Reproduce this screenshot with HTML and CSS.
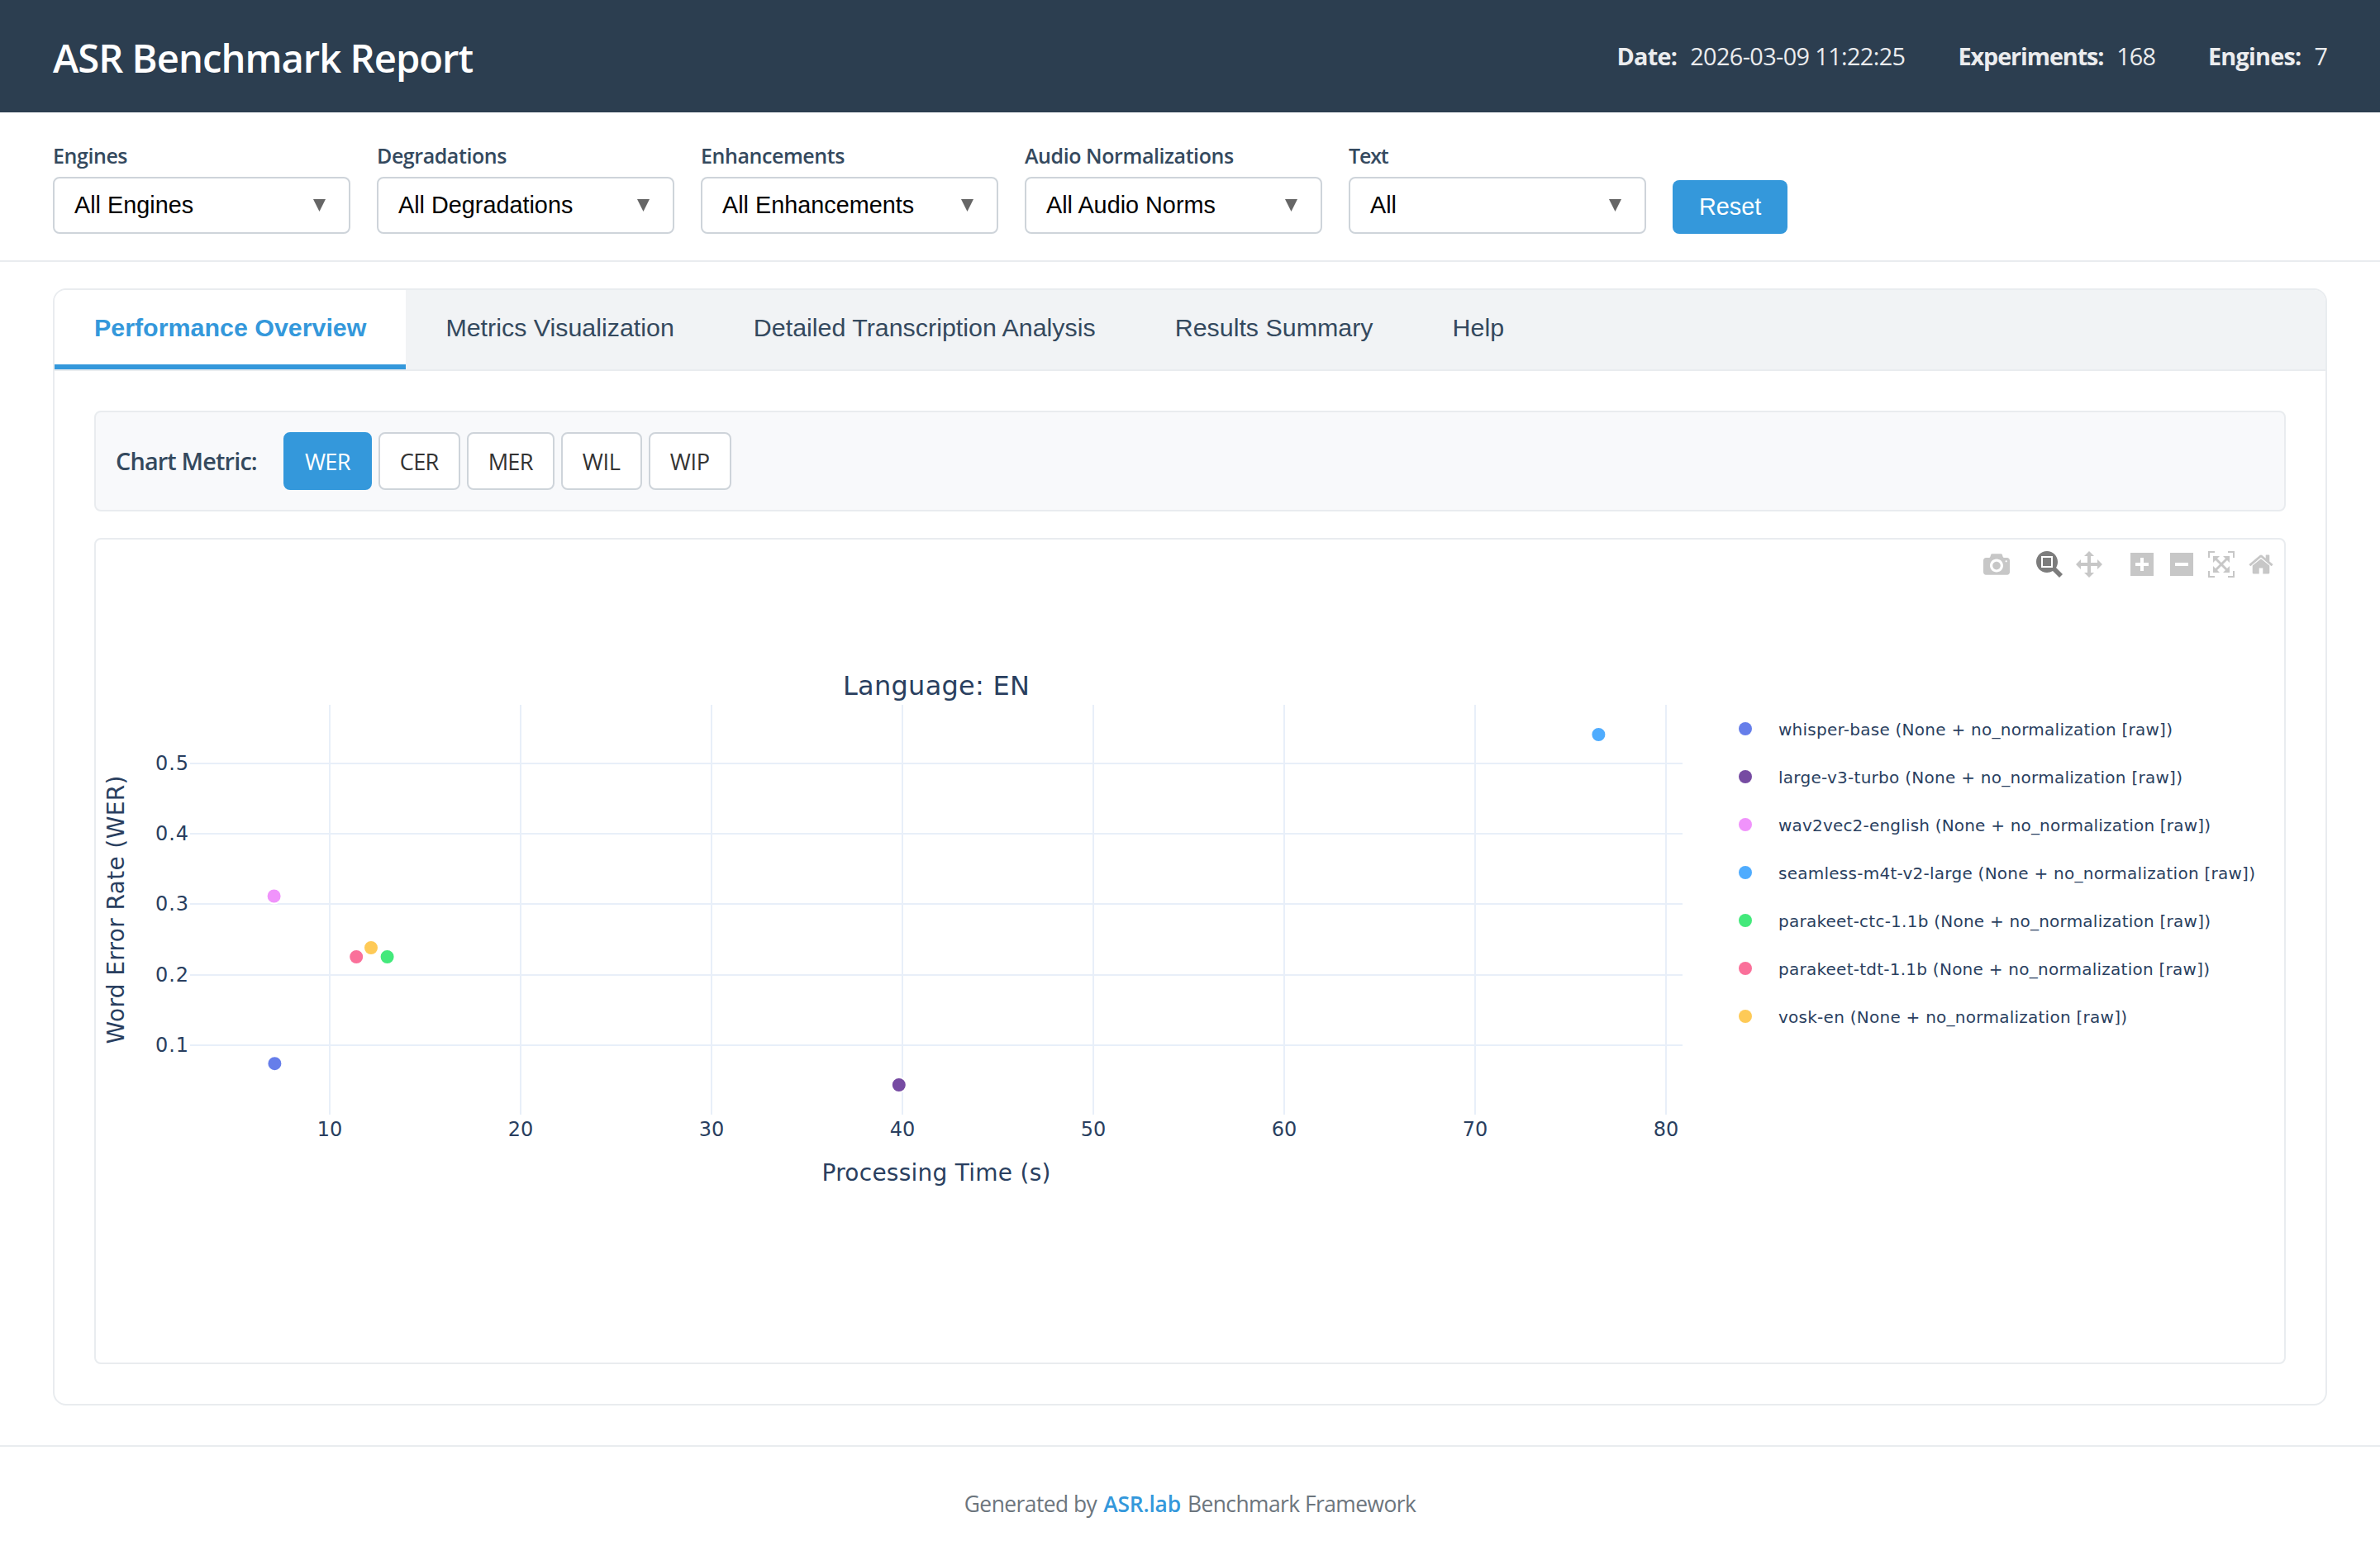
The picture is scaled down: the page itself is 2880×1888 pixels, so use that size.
FILE: index.html
```html
<!DOCTYPE html>
<html lang="en">
<head>
<meta charset="utf-8">
<title>ASR Benchmark Report</title>
<link rel="stylesheet" href="styles.css">
</head>
<body>
<header class="header">
  <h1 class="title">ASR Benchmark Report</h1>
  <div class="meta">
    <div class="meta-item"><strong>Date:</strong><span class="meta-date">2026-03-09 11:22:25</span></div>
    <div class="meta-item"><strong class="meta-wide">Experiments:</strong><span class="meta-count">168</span></div>
    <div class="meta-item"><strong>Engines:</strong><span class="meta-count">7</span></div>
  </div>
</header>

<section class="filters">
  <div class="filter"><label class="filter-label">Engines</label><div class="select"><span>All Engines</span><i class="caret"></i></div></div>
  <div class="filter"><label class="filter-label">Degradations</label><div class="select"><span>All Degradations</span><i class="caret"></i></div></div>
  <div class="filter"><label class="filter-label">Enhancements</label><div class="select"><span>All Enhancements</span><i class="caret"></i></div></div>
  <div class="filter"><label class="filter-label">Audio Normalizations</label><div class="select"><span>All Audio Norms</span><i class="caret"></i></div></div>
  <div class="filter"><label class="filter-label filter-label-short">Text</label><div class="select"><span>All</span><i class="caret"></i></div></div>
  <button class="reset">Reset</button>
</section>

<main class="panel">
  <nav class="tabs">
    <button class="tab tab-active">Performance Overview</button>
    <button class="tab">Metrics Visualization</button>
    <button class="tab">Detailed Transcription Analysis</button>
    <button class="tab">Results Summary</button>
    <button class="tab">Help</button>
  </nav>
  <div class="content">
    <div class="metric-bar">
      <span class="metric-label">Chart Metric:</span>
      <div class="metric-buttons">
        <button class="metric metric-active">WER</button>
        <button class="metric">CER</button>
        <button class="metric">MER</button>
        <button class="metric metric-narrow">WIL</button>
        <button class="metric metric-narrow">WIP</button>
      </div>
    </div>
    <div class="chart">
      <svg class="plot" viewBox="116 653 2648 996" width="2648" height="996">
        <g class="grid">
          <path d="M399 853V1349M630 853V1349M861 853V1349M1092 853V1349M1323 853V1349M1554 853V1349M1785 853V1349M2016 853V1349"/>
          <path d="M230 924H2036M230 1009H2036M230 1094H2036M230 1180H2036M230 1265H2036"/>
        </g>
        <g class="points">
          <circle cx="332.4" cy="1287.2" r="9" fill="#667eea"/>
          <circle cx="1087.8" cy="1313" r="9" fill="#764ba2"/>
          <circle cx="331.6" cy="1084.5" r="9" fill="#f093fb"/>
          <circle cx="1934.4" cy="889" r="9" fill="#4facfe"/>
          <circle cx="468.6" cy="1158" r="9" fill="#43e97b"/>
          <circle cx="431.2" cy="1158" r="9" fill="#fa709a"/>
          <circle cx="449" cy="1147" r="9" fill="#feca57"/>
        </g>
        <g class="tick tick-x">
          <text x="399" y="1375">10</text>
          <text x="630" y="1375">20</text>
          <text x="861" y="1375">30</text>
          <text x="1092" y="1375">40</text>
          <text x="1323" y="1375">50</text>
          <text x="1554" y="1375">60</text>
          <text x="1785" y="1375">70</text>
          <text x="2016" y="1375">80</text>
        </g>
        <g class="tick tick-y">
          <text x="228" y="932" textLength="40">0.5</text>
          <text x="228" y="1017" textLength="40">0.4</text>
          <text x="228" y="1102" textLength="40">0.3</text>
          <text x="228" y="1188" textLength="40">0.2</text>
          <text x="228" y="1273" textLength="40">0.1</text>
        </g>
        <text class="chart-title" x="1133" y="841" textLength="226">Language: EN</text>
        <text class="axis-title" x="1133" y="1429" textLength="277">Processing Time (s)</text>
        <text class="axis-title" transform="translate(150 1101) rotate(-90)" textLength="325">Word Error Rate (WER)</text>
        <g class="legend">
          <circle cx="2112" cy="882" r="8" fill="#667eea"/>
          <text x="2152" y="890" textLength="477">whisper-base (None + no_normalization [raw])</text>
          <circle cx="2112" cy="940" r="8" fill="#764ba2"/>
          <text x="2152" y="948" textLength="489">large-v3-turbo (None + no_normalization [raw])</text>
          <circle cx="2112" cy="998" r="8" fill="#f093fb"/>
          <text x="2152" y="1006" textLength="523">wav2vec2-english (None + no_normalization [raw])</text>
          <circle cx="2112" cy="1056" r="8" fill="#4facfe"/>
          <text x="2152" y="1064" textLength="577">seamless-m4t-v2-large (None + no_normalization [raw])</text>
          <circle cx="2112" cy="1114" r="8" fill="#43e97b"/>
          <text x="2152" y="1122" textLength="523">parakeet-ctc-1.1b (None + no_normalization [raw])</text>
          <circle cx="2112" cy="1172" r="8" fill="#fa709a"/>
          <text x="2152" y="1180" textLength="522">parakeet-tdt-1.1b (None + no_normalization [raw])</text>
          <circle cx="2112" cy="1230" r="8" fill="#feca57"/>
          <text x="2152" y="1238" textLength="422">vosk-en (None + no_normalization [raw])</text>
        </g>
      </svg>
      <div class="modebar">
        <div class="modebar-group">
          <svg viewBox="0 0 1000 1000" width="32" height="32"><path transform="matrix(1 0 0 -1 0 850)" d="m500 450c-83 0-150-67-150-150 0-83 67-150 150-150 83 0 150 67 150 150 0 83-67 150-150 150z m400 150h-120c-16 0-34 13-39 29l-31 93c-6 15-23 28-40 28h-340c-16 0-34-13-39-28l-31-94c-6-15-23-28-40-28h-120c-55 0-100-45-100-100v-450c0-55 45-100 100-100h800c55 0 100 45 100 100v450c0 55-45 100-100 100z m-400-550c-138 0-250 112-250 250 0 138 112 250 250 250 138 0 250-112 250-250 0-138-112-250-250-250z m365 380c-19 0-35 16-35 35 0 19 16 35 35 35 19 0 35-16 35-35 0-19-16-35-35-35z"/></svg>
        </div>
        <div class="modebar-group">
          <svg class="modebar-active" viewBox="0 0 1000 1000" width="32" height="32"><path transform="matrix(1 0 0 -1 0 850)" d="m1000-25l-250 251c40 63 63 138 63 218 0 224-182 406-407 406-224 0-406-182-406-406s183-406 407-406c80 0 155 22 218 62l250-250 125 125z m-812 250l0 438 437 0 0-438-437 0z m62 375l313 0 0-312-313 0 0 312z"/></svg>
          <svg viewBox="0 0 1000 1000" width="32" height="32"><path transform="matrix(1 0 0 -1 0 850)" d="m1000 350l-187 188 0-125-250 0 0 250 125 0-188 187-187-187 125 0 0-250-250 0 0 125-188-188 186-187 0 125 252 0 0-250-125 0 187-188 188 188-125 0 0 250 250 0 0-126 187 188z"/></svg>
        </div>
        <div class="modebar-group">
          <svg viewBox="0 0 875 1000" width="32" height="32"><path transform="matrix(1 0 0 -1 0 850)" d="m1 787l0-875 875 0 0 875-875 0z m687-500l-187 0 0-187-125 0 0 187-188 0 0 125 188 0 0 187 125 0 0-187 187 0 0-125z"/></svg>
          <svg viewBox="0 0 875 1000" width="32" height="32"><path transform="matrix(1 0 0 -1 0 850)" d="m0 788l0-876 876 0 0 876-876 0z m688-500l-500 0 0 125 500 0 0-125z"/></svg>
          <svg viewBox="0 0 1000 1000" width="32" height="32"><path transform="matrix(1 0 0 -1 0 850)" d="m250 850l-187 0-63 0 0-62 0-188 63 0 0 188 187 0 0 62z m688 0l-188 0 0-62 188 0 0-188 62 0 0 188 0 62-62 0z m-875-938l0 188-63 0 0-188 0-62 63 0 187 0 0 62-187 0z m875 188l0-188-188 0 0-62 188 0 62 0 0 62 0 188-62 0z m-125 188l-1 0-93-94-156 156 156 156 92-93 2 0 0 250-250 0 0-2 93-92-156-156-156 156 94 92 0 2-250 0 0-250 0 0 93 93 157-156-157-156-93 94 0 0 0-250 250 0 0 0-94 93 156 157 156-157-93-93 0 0 250 0 0 250z"/></svg>
          <svg viewBox="0 0 928.6 1000" width="32" height="32"><path transform="matrix(1 0 0 -1 0 850)" d="m786 296v-267q0-15-11-26t-25-10h-214v214h-143v-214h-214q-15 0-25 10t-11 26v267q0 1 0 2t0 2l321 264 321-264q1-1 1-4z m124 39l-34-41q-5-5-12-6h-2q-7 0-12 3l-386 322-386-322q-7-4-13-4-7 2-12 7l-35 41q-4 5-3 13t6 12l401 334q18 15 42 15t43-15l136-114v109q0 8 5 13t13 5h107q8 0 13-5t5-13v-227l122-102q5-5 6-12t-4-13z"/></svg>
        </div>
      </div>
    </div>
  </div>
</main>

<footer class="footer"><span>Generated by</span><a class="foot-link">ASR.lab</a><span>Benchmark Framework</span></footer>
</body>
</html>
```
FILE: styles.css
```css
* { box-sizing: border-box; }
body {
  margin: 0;
  background: #fff;
  color: #2c3e50;
  font-family: "Open Sans", "Noto Sans", sans-serif;
}
button { border: 0; margin: 0; background: none; font-family: "Liberation Sans", Arial, sans-serif; }

.header {
  display: flex;
  justify-content: space-between;
  align-items: center;
  height: 136px;
  padding: 0 64px;
  background: #2c3e50;
  color: #fff;
}
.title { margin: 0; padding-top: 4px; font-size: 47.2px; font-weight: 600; line-height: 64px; letter-spacing: -0.98px; }
.meta { display: flex; gap: 64px; font-size: 28.8px; line-height: 40px; color: #ebecee; }
.meta-item { display: flex; gap: 16px; }
.meta strong { font-weight: 700; letter-spacing: -0.75px; }
.meta .meta-wide { letter-spacing: -1.1px; }
.meta-date { letter-spacing: -0.6px; }
.meta-count { letter-spacing: -0.95px; }

.filters {
  display: flex;
  align-items: flex-end;
  gap: 32px;
  height: 181px;
  padding: 0 64px 32px;
  border-bottom: 2px solid #e9ecef;
}
.filter { display: flex; flex-direction: column; gap: 9px; width: 360px; }
.filter-label { font-size: 25px; font-weight: 600; line-height: 34px; letter-spacing: -0.43px; color: #34495e; white-space: nowrap; }
.filter-label-short { letter-spacing: -1.2px; }
.select {
  display: flex;
  align-items: center;
  justify-content: space-between;
  height: 69px;
  padding: 0 28px 0 24px;
  border: 2px solid #ced4da;
  border-radius: 8px;
  color: #000;
  font: 28.8px "Liberation Sans", Arial, sans-serif;
}
.caret { width: 15px; height: 15px; background: #666; clip-path: polygon(0 0, 100% 0, 50% 100%); }
.reset {
  height: 65px;
  padding: 0 32px;
  border-radius: 8px;
  background: #3498db;
  color: #fff;
  font-size: 28.8px;
}

.panel {
  margin: 32px 64px 48px;
  height: 1352px;
  border: 2px solid #e9ecef;
  border-radius: 16px;
  overflow: hidden;
}
.tabs { display: flex; height: 98px; background: #f1f3f5; border-bottom: 2px solid #e9ecef; }
.tab { padding: 0 48px; border-bottom: 6px solid transparent; color: #34495e; font-size: 30.4px; }
.tab-active { background: #fff; border-bottom-color: #3498db; color: #3498db; font-weight: 700; }
.content { padding: 48px; }

.metric-bar {
  display: flex;
  align-items: center;
  gap: 32px;
  height: 122px;
  padding: 0 24px;
  border: 2px solid #e9ecef;
  border-radius: 8px;
  background: #f8f9fb;
}
.metric-label { padding-bottom: 2px; font-size: 28.8px; font-weight: 600; letter-spacing: -0.83px; color: #34495e; }
.metric-buttons { display: flex; gap: 8px; }
.metric {
  height: 70px;
  padding: 0 24px;
  border: 2px solid #ced4da;
  border-radius: 8px;
  background: #fff;
  color: #333;
  font: 27.2px "Open Sans", "Noto Sans", sans-serif;
  letter-spacing: -0.72px;
}
.metric-narrow { letter-spacing: -0.35px; }
.metric-active { background: #3498db; border-color: #3498db; color: #fff; }

.chart {
  position: relative;
  height: 1000px;
  margin-top: 32px;
  border: 2px solid #e9ecef;
  border-radius: 8px;
}
.plot { display: block; font-family: Verdana, "DejaVu Sans", sans-serif; fill: #2a3f5f; }
.grid { stroke: #e8eff9; stroke-width: 2; }
.points { stroke: #fff; stroke-width: 2; }
.tick { font-size: 24px; }
.tick-x, .chart-title, .axis-title { text-anchor: middle; }
.tick-y { text-anchor: end; }
.chart-title { font-size: 32px; }
.axis-title { font-size: 28px; }
.legend { font-size: 20px; }
.modebar { position: absolute; top: 14px; right: 12px; display: flex; gap: 32px; fill: #c7c7c7; }
.modebar-group { display: flex; gap: 16px; }
.modebar svg { display: block; }
.modebar-active { fill: #7c7c7c; }

.footer {
  display: flex;
  justify-content: center;
  gap: 8px;
  padding-top: 50px;
  border-top: 2px solid #e9ecef;
  color: #6c757d;
  font-size: 26.4px;
  line-height: 38px;
  letter-spacing: -0.55px;
}
.foot-link { color: #3498db; font-weight: 600; letter-spacing: -0.2px; }
```
